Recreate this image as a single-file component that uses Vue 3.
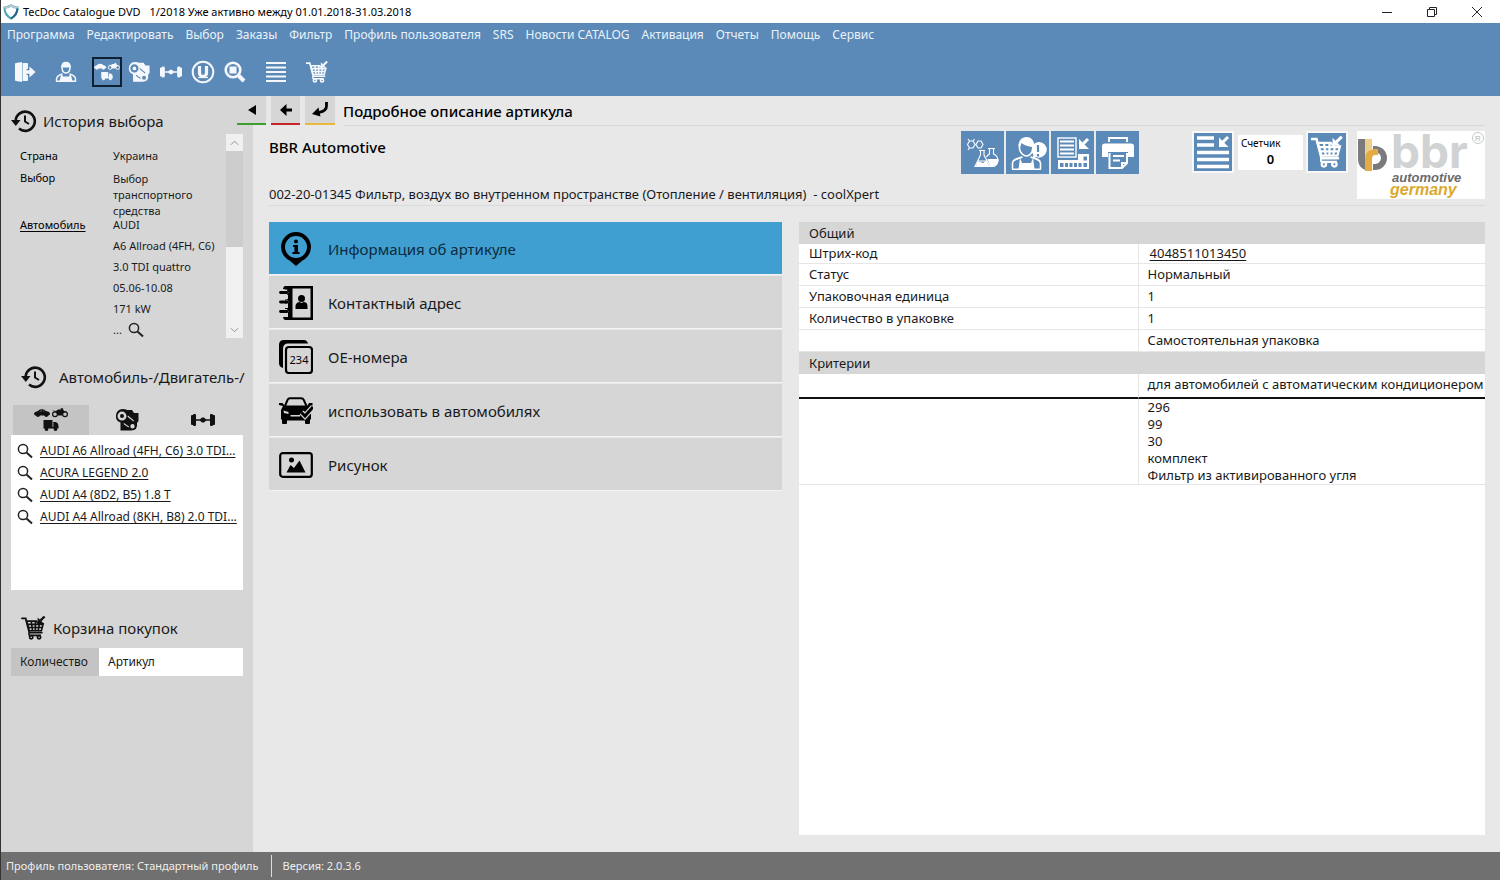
<script setup>
import { ref } from 'vue'

const menu = ['Программа', 'Редактировать', 'Выбор', 'Заказы', 'Фильтр', 'Профиль пользователя', 'SRS', 'Новости CATALOG', 'Активация', 'Отчеты', 'Помощь', 'Сервис']

const toolGroups = [
  [{ icon: 'exit', label: 'Выход' }],
  [{ icon: 'person', label: 'Клиент' }],
  [
    { icon: 'vehicles', label: 'Автомобили', on: true },
    { icon: 'engine', label: 'Двигатели' },
    { icon: 'axle', label: 'Оси' },
    { icon: 'universal', label: 'Универсальные' },
    { icon: 'find', label: 'Поиск' },
  ],
  [{ icon: 'lines', label: 'Список' }],
  [{ icon: 'cart', label: 'Корзина' }],
]

const vehicles = ['AUDI A6 Allroad (4FH, C6) 3.0 TDI...', 'ACURA LEGEND 2.0', 'AUDI A4 (8D2, B5) 1.8 T', 'AUDI A4 Allroad (8KH, B8) 2.0 TDI...']

const sections = [
  { icon: 'info', title: 'Информация об артикуле' },
  { icon: 'book', title: 'Контактный адрес' },
  { icon: 'numbers', title: 'ОЕ-номера' },
  { icon: 'carcheck', title: 'использовать в автомобилях' },
  { icon: 'image', title: 'Рисунок' },
]
const active = ref(0)

const general = [
  ['Статус', 'Нормальный'],
  ['Упаковочная единица', '1'],
  ['Количество в упаковке', '1'],
  ['', 'Самостоятельная упаковка'],
]
const criteria = ['296', '99', '30', 'комплект', 'Фильтр из активированного угля']
</script>

<template>
  <div class="app">
    <svg class="sprite" aria-hidden="true">
      <symbol id="exit" viewBox="0 0 22 22">
        <path d="M1 3Q1 2 2 2L8 1V21L2 20Q1 20 1 19Z" fill="currentColor" />
        <path d="M8.500 2H13Q14 2 14 3V8H12.500V14H14V19Q14 20 13 20H8.500Z" fill="currentColor" />
        <path d="M11.500 9.200H15.500V5.500L21.500 11L15.500 16.500V12.800H11.500Z" fill="currentColor" />
      </symbol>
      <symbol id="person" viewBox="0 0 22 22">
        <path d="M7 6C7 2 9 1.500 11 1.500S15 2 15 6C15 10 13 12 11 12S7 10 7 6Z" fill="none" stroke="currentColor" stroke-width="1.500" />
        <path d="M6.300 6.500C6 -.5 16 -.5 15.700 6.500Z" fill="currentColor" />
        <path d="M1.500 20.500V18C1.800 15 4 14 7.500 13M20.500 20.500V18C20.200 15 18 14 14.500 13M1 20.200H21" fill="none" stroke="currentColor" stroke-width="1.500" />
        <path d="M6.500 12.500L8 15.500H14L15.500 12.500L17.500 20H4.500Z" fill="currentColor" />
      </symbol>
      <symbol id="vehicles" viewBox="0 0 34 24">
        <path d="M0 6Q0 4 3 3.500L6 1.500Q10 .5 12 3L15 4Q16 4.500 16 6.500L14.500 7.500H1Z" fill="currentColor" />
        <path d="M5.200 3.500L6.500 2.500H8V3.500ZM9 2.500H10L11 3.500H9Z" fill="#ffffff" fill-opacity=".35" />
        <circle cx="4" cy="7.200" r="1.800" fill="currentColor" /><circle cx="12.300" cy="7.200" r="1.800" fill="currentColor" />
        <circle cx="21" cy="6.200" r="2.400" fill="none" stroke="currentColor" stroke-width="1.200" /><circle cx="31" cy="6.200" r="2.400" fill="none" stroke="currentColor" stroke-width="1.200" />
        <path d="M18 2.500L22 3L24 1.500L27 1.500L26.500 .5L28.500 0L30 3L33 3.500L29.500 4.500L28 7.500H23.500L22.500 4.500Z" fill="currentColor" />
        <path d="M9.500 12H18.500V20H9.500ZM19.300 14H22Q24.500 15 24.500 18V20.500H9.500V19H19.300Z" fill="currentColor" />
        <circle cx="12.500" cy="21" r="1.900" fill="currentColor" /><circle cx="21.500" cy="21" r="1.900" fill="currentColor" />
      </symbol>
      <symbol id="engine" viewBox="0 0 24 22">
        <path fill-rule="evenodd" d="M7 0Q11 0 12 1H17L19 4H23.500V12L22 14Q23 21.500 16 21.500H5.500V13.500A7 7 0 0 1 7 0ZM7 2.600A4.500 4.500 0 1 0 7 11.600A4.500 4.500 0 0 0 7 2.600ZM17.500 15A2.200 2.200 0 1 0 17.500 19.400A2.200 2.200 0 0 0 17.500 15ZM13 6.500L12.500 7.700L18.500 12.500L19 11.500ZM9 14L8.500 15L13.500 18.500L14 17.500Z" fill="currentColor" />
        <circle cx="7" cy="7.100" r="2" fill="currentColor" />
      </symbol>
      <symbol id="axle" viewBox="0 0 24 12">
        <rect x="0" y="1" width="5" height="10" rx="1" fill="currentColor" /><rect x="2" y="0" width="3" height="12" rx="1" fill="currentColor" />
        <rect x="19" y="0" width="3" height="12" rx="1" fill="currentColor" /><rect x="19" y="1" width="5" height="10" rx="1" fill="currentColor" />
        <path d="M5 5.200H9L11 3.500H13L15 5.200H19V6.800H15L13 8.500H11L9 6.800H5Z" fill="currentColor" />
      </symbol>
      <symbol id="universal" viewBox="0 0 24 24">
        <circle cx="12" cy="12" r="10.300" fill="none" stroke="currentColor" stroke-width="2" />
        <path d="M8.500 6V13A3.500 3.500 0 0 0 15.500 13V6" fill="none" stroke="currentColor" stroke-width="3.200" />
        <path d="M7 17.500H17" stroke="currentColor" stroke-width="1.200" />
      </symbol>
      <symbol id="find" viewBox="0 0 22 22">
        <circle cx="9" cy="9" r="7.300" fill="none" stroke="currentColor" stroke-width="2.600" />
        <rect x="5.500" y="5.500" width="7" height="7" fill="currentColor" />
        <path d="M14.500 14.500L20 20" stroke="currentColor" stroke-width="4" />
      </symbol>
      <symbol id="lines" viewBox="0 0 20 20">
        <path d="M0 1H20M0 5.500H20M0 10H20M0 14.500H20M0 19H20" stroke="currentColor" stroke-width="2" />
      </symbol>
      <symbol id="cart" viewBox="0 0 26 26">
        <path d="M.5 2.500H4.500L8.500 18H22" fill="none" stroke="currentColor" stroke-width="2" stroke-linecap="round" />
        <path d="M5.500 5.500H16L18.500 8.500H23.500L21.500 16H8.500Z" fill="none" stroke="currentColor" stroke-width="1.800" />
        <path d="M6.500 9H23M7.500 12.500H22.500M10.500 5.500L12 16M15 6V16M19.500 8.500L18 16" fill="none" stroke="currentColor" stroke-width="1.800" />
        <path d="M8.500 18C7.500 20.500 8 21 10 21H21" fill="none" stroke="currentColor" stroke-width="1.700" />
        <circle cx="10.500" cy="23" r="1.800" fill="none" stroke="currentColor" stroke-width="1.800" /><circle cx="19" cy="23" r="1.800" fill="none" stroke="currentColor" stroke-width="1.800" />
        <path d="M25 .5L20.500 5" stroke="currentColor" stroke-width="2.400" /><path d="M17.500 1.500V7.500H23.500Z" fill="currentColor" />
      </symbol>
      <symbol id="history" viewBox="0 0 26 24">
        <path d="M4.600 12A9.600 9.600 0 1 1 8 19.600" fill="none" stroke="currentColor" stroke-width="2.600" />
        <path d="M0 11H9.500L4.800 17Z" fill="currentColor" />
        <path d="M14 6.500V12.500L18 15" fill="none" stroke="currentColor" stroke-width="2" />
      </symbol>
      <symbol id="lens" viewBox="0 0 16 16">
        <circle cx="6" cy="6" r="4.600" fill="none" stroke="currentColor" stroke-width="1.500" />
        <path d="M9.500 9.500L15 14.500" stroke="currentColor" stroke-width="2" />
      </symbol>
      <symbol id="info" viewBox="0 0 34 34">
        <circle cx="17" cy="15" r="13" fill="none" stroke="currentColor" stroke-width="4" />
        <path d="M10 28H24L17 34Z" fill="currentColor" />
        <circle cx="17" cy="9.500" r="2" fill="currentColor" />
        <path d="M14 13H19V20H20.500V22H13.500V20H15.500V15H14Z" fill="currentColor" />
      </symbol>
      <symbol id="book" viewBox="0 0 34 34">
        <path fill-rule="evenodd" d="M6 0H34V34H6Q4.500 34 4 31H9V27H6V22H9V18H6V13H9V9H6V4H9L4 3Q4.500 0 6 0ZM13.500 2.500V31.500H31.500V2.500Z" fill="currentColor" />
        <path d="M2 4.500H8Q10 6.500 8 8.500H2M2 14H8Q10 16 8 18H2M2 23.500H8Q10 25.500 8 27.500H2" fill="none" stroke="#d6d6d6" stroke-width="1" />
        <path d="M1.500 6.500H8M1.500 16H8M1.500 25.500H8" stroke="currentColor" stroke-width="2.800" stroke-linecap="round" />
        <circle cx="22.500" cy="12.500" r="3.500" fill="currentColor" /><path d="M16.500 23V19.500C17 17 19 16 20.500 16L22.500 17L24.500 16C27 16 28.500 17.500 28.500 20V23Z" fill="currentColor" />
      </symbol>
      <symbol id="numbers" viewBox="0 0 34 34">
        <path d="M25 0Q28 0 29 3.500H9Q4 3.500 4 9V28Q0 27 0 23V5Q0 0 5 0Z" fill="currentColor" />
        <rect x="7" y="7" width="26" height="26" rx="3" fill="none" stroke="currentColor" stroke-width="2.200" />
        <text x="20" y="24" text-anchor="middle" font-size="11" fill="currentColor">234</text>
      </symbol>
      <symbol id="carcheck" viewBox="0 0 34 34">
        <path d="M6 12L8.500 6Q9.300 4.200 11 4.200H22Q24 4.200 24.800 6L27.500 12" fill="none" stroke="currentColor" stroke-width="2" />
        <path d="M0 9H3.500L5.500 11.500H28.500L30 9H33.500V11.500L31 12L32 15V25L31 26V29Q31 30 30 30H27Q26 30 26 29V26.500H8V29Q8 30 7 30H4Q3 30 3 29V26L2 25V16L4 12L0 11Z" fill="currentColor" />
        <path d="M4.500 16.500L9.500 18V20L5 19ZM11.500 21H21V22.500H11.500Z" fill="#d6d6d6" />
        <path d="M22.500 18.500L26 22L34 13" fill="none" stroke="#d6d6d6" stroke-width="5.500" />
        <path d="M22.500 18.500L26 22L34 13" fill="none" stroke="currentColor" stroke-width="3" />
      </symbol>
      <symbol id="image" viewBox="0 0 34 26">
        <rect x="1.200" y="1.200" width="31.600" height="23.600" rx="2.500" fill="none" stroke="currentColor" stroke-width="2.200" />
        <circle cx="12.500" cy="8" r="2.500" fill="currentColor" /><path d="M7.500 20.500L11.500 13L15 16L20.500 8.500L26.500 20.500Z" fill="currentColor" />
      </symbol>
      <symbol id="flasks" viewBox="0 0 42 42">
        <g fill="none" stroke="currentColor" stroke-width="1.100">
          <path d="M5.500 12.500L7.500 9H11L13 12.500L11 16H7.500ZM14 12.500L16 9H19L21 12.500L19 16H16ZM13 12.500H14M7.500 9L6 7M11 9L12.500 7M7.500 16L6 18" />
          <path d="M17 18.500H23M18.500 18.500V23L13 34.500H28L22 23V18.500M15.500 29H25" />
          <path d="M26 16.500H33M27.500 16.500V22A7 7 0 0 0 24.500 25M31.500 16.500V22A6.800 6.800 0 0 1 32 34.500H27" />
        </g>
        <path d="M15.500 29L21 31L24.500 28.500L27 34H14ZM25.500 27H36.500C37 31 34 34 31 34H28Z" fill="currentColor" />
      </symbol>
      <symbol id="advisor" viewBox="0 0 42 42">
        <path d="M12.500 12V17C13 21 17 24 19.500 24S25.500 21 26 17V12" fill="none" stroke="currentColor" stroke-width="1.600" />
        <path d="M12 16C9 2 29 1 27 15C22 15 17 13 14.500 11Q14 14 12 16Z" fill="currentColor" />
        <path d="M5.500 37V31C6 27.500 10 26.500 15.500 25M33.500 37V31C33 27.500 29 26.500 23.500 25M5 37.200H34" fill="none" stroke="currentColor" stroke-width="1.600" />
        <path d="M13 26L15 31H24L26 26L27.500 37H11.500Z" fill="currentColor" />
        <path d="M31.500 10A7.800 7.800 0 1 1 29 25L25.500 26L26.500 23A8 8 0 0 1 31.500 10Z" fill="currentColor" />
        <path d="M31 13V20M31 22V24.500" stroke="#5c8ab8" stroke-width="2.200" />
      </symbol>
      <symbol id="transfer" viewBox="0 0 42 42">
        <rect x="6" y="6" width="18" height="19" fill="none" stroke="currentColor" stroke-width="1.400" />
        <path d="M8 9.500H22M8 13.500H22M8 17.500H22M8 21.500H22" stroke="currentColor" stroke-width="1.800" />
        <path d="M6 28H26V22H37V37H6Z" fill="currentColor" />
        <path d="M8 31H11.500V35H8ZM13 31H16V35H13ZM17.500 31H20.500V35H17.500ZM22 31H25V35H22ZM26.500 31H29.500V35H26.500ZM31.500 31H35V35H31.500ZM31.500 24.500H35V28.500H31.500Z" fill="#5c8ab8" />
        <path d="M36 7L30 13" stroke="currentColor" stroke-width="3" /><path d="M27 7V17H37Z" fill="currentColor" />
      </symbol>
      <symbol id="printer" viewBox="0 0 42 42">
        <path d="M12 10V6H30V10" fill="none" stroke="currentColor" stroke-width="1.800" />
        <path d="M5 14Q5 11.500 8 11.500H34Q37 11.500 37 14V25H31V20H11V25H5Z" fill="currentColor" />
        <path d="M12.500 21V36H25L30 31V21M25 36V31H30M16 24H27M16 28.500H23" fill="none" stroke="currentColor" stroke-width="2" />
      </symbol>
      <symbol id="addlist" viewBox="0 0 38 38">
        <path d="M3 5H20M3 12H20M3 19.500H35M3 26.500H35M3 33.500H35" stroke="currentColor" stroke-width="3.400" />
        <path d="M34 4L28 10" stroke="currentColor" stroke-width="3" /><path d="M25 4.500V14H34.500Z" fill="currentColor" />
      </symbol>
    </svg>

    <header class="titlebar">
      <svg class="shield" viewBox="0 0 16 16"><path d="M1.500 3.500Q5 3.500 8 1.500Q11 3.500 14.500 3.500Q14.500 11 8 14.500Q1.500 11 1.500 3.500Z" fill="#fff" stroke="#4fa9b8" stroke-width="2.200" /><path d="M1 3.500Q5 3.500 8 1.500Q11 3.500 15 3.500" fill="none" stroke="#b7c9d0" stroke-width="2" /><path d="M14.500 4.500Q14 11 8 14.500" fill="none" stroke="#2b6480" stroke-width="2" /></svg>
      <h1>TecDoc Catalogue DVD <span>1/2018 Уже активно между 01.01.2018-31.03.2018</span></h1>
      <div class="wincontrols">
        <button aria-label="Свернуть"><svg viewBox="0 0 12 12"><path d="M1 6.500H11" /></svg></button>
        <button aria-label="Восстановить"><svg viewBox="0 0 12 12"><path d="M1.500 3.500H8.500V10.500H1.500ZM3.500 3.500V1.500H10.500V8.500H8.500" /></svg></button>
        <button aria-label="Закрыть"><svg viewBox="0 0 12 12"><path d="M1 1L11 11M11 1L1 11" /></svg></button>
      </div>
    </header>

    <nav class="menu"><button v-for="m in menu" :key="m">{{ m }}</button></nav>

    <div class="toolbar">
      <div v-for="(g, i) in toolGroups" :key="i" class="group">
        <button v-for="t in g" :key="t.icon" :class="{ on: t.on }" :aria-label="t.label">
          <svg :class="'t-' + t.icon"><use :href="'#' + t.icon" /></svg>
        </button>
      </div>
    </div>

    <div class="body">
      <aside class="side">
        <h2 class="h-history"><svg class="i-history"><use href="#history" /></svg>История выбора</h2>
        <div class="history">
          <dl>
            <dt>Страна</dt><dd>Украина</dd>
            <dt>Выбор</dt><dd class="wrap">Выбор транспортного средства</dd>
            <dt class="car"><a href="#">Автомобиль</a></dt>
            <dd class="specs">
              <div>AUDI</div><div>A6 Allroad (4FH, C6)</div><div>3.0 TDI quattro</div><div>05.06-10.08</div><div>171 kW</div>
              <div class="more">... <svg class="i-lens"><use href="#lens" /></svg></div>
            </dd>
          </dl>
          <div class="scroll">
            <button aria-label="Вверх"><svg viewBox="0 0 10 6"><path d="M1 5L5 1L9 5" /></svg></button>
            <div class="thumb"></div>
            <button aria-label="Вниз"><svg viewBox="0 0 10 6"><path d="M1 1L5 5L9 1" /></svg></button>
          </div>
        </div>

        <h2 class="h-vehicle"><svg class="i-history"><use href="#history" /></svg><span>Автомобиль-/Двигатель-/</span></h2>
        <div class="tabs">
          <button class="on" aria-label="Автомобили"><svg class="s-vehicles"><use href="#vehicles" /></svg></button>
          <button aria-label="Двигатели"><svg class="s-engine"><use href="#engine" /></svg></button>
          <button aria-label="Оси"><svg class="s-axle"><use href="#axle" /></svg></button>
        </div>
        <ul class="vehicles">
          <li v-for="v in vehicles" :key="v"><svg class="i-lens"><use href="#lens" /></svg><a href="#">{{ v }}</a></li>
        </ul>

        <h2 class="h-cart"><svg class="i-cart"><use href="#cart" /></svg>Корзина покупок</h2>
        <table class="basket"><thead><tr><th>Количество</th><th>Артикул</th></tr></thead></table>
      </aside>

      <main class="main">
        <div class="crumbs">
          <button class="green" aria-label="Свернуть панель"><svg viewBox="0 0 16 16"><path d="M12 3V13L4 8Z" fill="currentColor" /></svg></button>
          <button class="red" aria-label="Назад"><svg viewBox="0 0 16 16"><path d="M2 8L8.500 2V6.500H14V9.500H8.500V14Z" fill="currentColor" /></svg></button>
          <button class="yellow" aria-label="К результату"><svg viewBox="0 0 16 16"><path d="M14.500 0V4Q14.500 9 7 10.500" fill="none" stroke="currentColor" stroke-width="2.800" /><path d="M0 12L6.500 5.500L8.500 14.500Z" fill="currentColor" /></svg></button>
          <h2>Подробное описание артикула</h2>
        </div>

        <div class="article">
          <div class="names">
            <h3>BBR Automotive</h3>
            <p>002-20-01345 Фильтр, воздух во внутренном пространстве (Отопление / вентиляция) &nbsp;- coolXpert</p>
          </div>
          <div class="actions">
            <button class="big" aria-label="Состав"><svg><use href="#flasks" /></svg></button>
            <button class="big" aria-label="Консультант"><svg><use href="#advisor" /></svg></button>
            <button class="big" aria-label="Передать"><svg><use href="#transfer" /></svg></button>
            <button class="big" aria-label="Печать"><svg><use href="#printer" /></svg></button>
          </div>
          <button class="small" aria-label="В список"><svg class="fill"><use href="#addlist" /></svg></button>
          <div class="counter"><span>Счетчик</span><strong>0</strong></div>
          <button class="small" aria-label="В корзину"><svg class="cartbig"><use href="#cart" /></svg></button>
          <svg class="logo" viewBox="0 0 128 68" role="img" aria-label="bbr automotive germany">
            <path d="M1 8H8V39Q1 36 1 28Z" fill="#7b7b7e" />
            <path d="M8 8H15V18Q9 20 8 26Z" fill="#eccf8d" />
            <path d="M16 15H18A12 12 0 0 1 18 39H16V33H18A6 6 0 0 0 18 21H16Z" fill="#7b7b7e" />
            <path d="M8 40V28Q8 18 18 18H21V24H18Q15 24 15 28V40Z" fill="#e3ab42" />
            <text x="34" y="37" class="bbr">bbr</text>
            <text x="35" y="51" class="auto">automotive</text>
            <text x="33" y="64" class="germ">germany</text>
            <circle cx="121" cy="7" r="5.500" fill="none" stroke="#c8c8c8" /><text x="121" y="10" text-anchor="middle" class="reg">R</text>
          </svg>
        </div>

        <div class="panes">
          <div class="sections">
            <button v-for="(s, i) in sections" :key="s.icon" :class="{ on: i === active }" @click="active = i">
              <svg><use :href="'#' + s.icon" /></svg>{{ s.title }}
            </button>
          </div>
          <div class="details">
            <table>
              <colgroup><col class="k" /><col class="v" /></colgroup>
              <tbody>
                <tr class="head"><th colspan="2">Общий</th></tr>
                <tr class="code"><td>Штрих-код</td><td><a href="#">4048511013450</a></td></tr>
                <tr v-for="r in general" :key="r[1] + r[0]"><td>{{ r[0] }}</td><td>{{ r[1] }}</td></tr>
                <tr class="head"><th colspan="2">Критерии</th></tr>
                <tr class="marked"><td></td><td>для автомобилей с автоматическим кондиционером</td></tr>
                <tr class="list"><td></td><td><div v-for="c in criteria" :key="c">{{ c }}</div></td></tr>
              </tbody>
            </table>
          </div>
        </div>
      </main>
    </div>

    <footer class="status"><span>Профиль пользователя: Стандартный профиль</span><span>Версия: 2.0.3.6</span></footer>
  </div>
</template>

<style>
body { margin: 0; }
</style>

<style scoped>
.app { box-sizing: border-box; min-height: 100vh; display: flex; flex-direction: column; border-left: 1px solid #333; background: #e8e8e8; color: #1a1a1a; font: 12px/16px "Noto Sans", "Open Sans", sans-serif; }
.app *, .app *::before { box-sizing: border-box; }
.sprite { display: none; }
button { border: 0; padding: 0; margin: 0; background: none; color: inherit; font: inherit; display: flex; align-items: center; justify-content: center; }
a { color: inherit; text-underline-offset: 2px; }
h1, h2, h3, p, dl, dd, ul { margin: 0; padding: 0; font-weight: 400; }
svg { flex: none; }

.titlebar { display: flex; align-items: center; height: 23px; background: #fff; padding-left: 2px; }
.shield { width: 16px; height: 16px; }
.titlebar h1 { flex: 1; margin-left: 4px; font-size: 11px; color: #000; }
.titlebar h1 span { margin-left: 6px; }
.wincontrols { display: flex; padding-right: 1px; }
.wincontrols button { width: 45px; height: 20px; }
.wincontrols svg { width: 12px; height: 12px; fill: none; stroke: #222; }

.menu { display: flex; gap: 12px; padding: 0 6px; height: 24px; align-items: center; background: #5c8ab8; color: #eaf2fa; }
.toolbar { display: flex; align-items: center; gap: 11px; height: 49px; padding-left: 9px; background: #5c8ab8; color: #f4f8fc; }
.group { display: flex; gap: 2px; }
.group button { width: 30px; height: 30px; }
.group button.on { border: 2px solid #10202f; }
.group svg { width: 22px; height: 22px; }
.group .t-vehicles { width: 26px; height: 22px; }
.group .t-universal { width: 24px; height: 24px; }
.group .t-lines { width: 20px; height: 20px; }
.group .t-axle { height: 14px; }

.body { flex: 1; display: flex; }
.side { width: 252px; flex: none; background: #d6d6d6; padding: 12px 10px 0; }
.side h2 { display: flex; align-items: center; font-size: 15px; line-height: 26px; white-space: nowrap; }
.i-history { width: 26px; height: 24px; margin-right: 6px; color: #111; }
.history { display: flex; height: 204px; }
.history dl { flex: 1; display: grid; grid-template-columns: 93px 1fr; align-content: start; padding: 14px 0 0 9px; font-size: 11px; line-height: 16px; white-space: nowrap; }
.history dt { height: 22px; color: #000; }
.history .wrap { white-space: normal; width: 90px; }
.history .wrap, .history .specs, .history .car { padding-top: 1px; }
.history .car, .history .specs { margin-top: -3px; }
.specs div { height: 21px; }
.more { display: flex; gap: 6px; }
.i-lens { width: 16px; height: 16px; color: #222; }
.scroll { width: 17px; display: flex; flex-direction: column; background: #f0f0f0; }
.scroll button { height: 17px; width: 17px; }
.scroll button:last-child { margin-top: auto; }
.scroll svg { width: 9px; height: 6px; fill: none; stroke: #888; }
.thumb { height: 96px; background: #cdcdcd; }
.side .h-vehicle { margin-top: 26px; padding-left: 10px; }
.h-vehicle .i-history { margin-right: 12px; }
.tabs { display: flex; margin-top: 15px; padding: 0 2px; }
.tabs button { flex: 1; height: 30px; color: #111; }
.tabs .on { background: #c4c4c4; }
.s-vehicles { width: 34px; height: 24px; }
.s-engine { width: 24px; height: 22px; }
.s-axle { width: 24px; height: 12px; }
.vehicles { list-style: none; height: 155px; background: #fff; padding: 5px 0 0 6px; }
.vehicles li { display: flex; align-items: center; height: 22px; white-space: nowrap; }
.vehicles a { margin-left: 7px; }
.side .h-cart { margin-top: 25px; padding-left: 10px; }
.i-cart { width: 25px; height: 24px; margin-right: 7px; color: #111; }
.basket { width: 100%; margin-top: 7px; border-collapse: collapse; background: #fff; }
.basket th { height: 28px; padding: 0 9px; font-weight: 400; text-align: left; }
.basket th:first-child { width: 88px; background: #c4c4c4; }

.main { flex: 1; min-width: 0; display: flex; flex-direction: column; padding: 0 15px 17px 16px; }
.crumbs { display: flex; gap: 5px; margin-left: -32px; height: 30px; }
.crumbs button { width: 29px; height: 29px; background: #d6d6d6; border-bottom: 2px solid; color: #000; }
.crumbs .green { border-color: #3c9e2b; }
.crumbs .red { border-color: #c8242b; }
.crumbs .yellow { border-color: #e9b93c; width: 30px; }
.crumbs svg { width: 16px; height: 16px; }
.crumbs h2 { flex: 1; margin-left: 3px; border-bottom: 1px solid #d8d8d8; font-size: 15px; font-weight: 500; line-height: 30px; color: #000; }
.article { display: flex; height: 80px; padding-top: 5px; border-bottom: 1px solid #dadada; }
.names { flex: 1; min-width: 0; white-space: nowrap; }
.names h3 { font-size: 15px; font-weight: 500; line-height: 32px; color: #000; }
.names p { margin-top: 23px; font-size: 13px; line-height: 16px; }
.actions { display: flex; gap: 2px; margin-right: 53px; }
.big { width: 43px; height: 43px; background: #5c8ab8; color: #fff; }
.big svg { width: 42px; height: 42px; }
.small { width: 42px; height: 42px; border: 2px solid #f8f8f8; background: #5c8ab8; color: #fff; }
.fill { width: 38px; height: 38px; }
.cartbig { width: 32px; height: 32px; }
.counter { width: 65px; height: 35px; margin: 4px 3px 0 4px; background: #fff; padding: 0 3px; display: flex; flex-direction: column; font-size: 10px; color: #000; }
.counter strong { align-self: center; font-size: 13px; font-weight: 600; }
.logo { width: 128px; height: 68px; margin-left: 9px; background: #fff; overflow: visible; }
.bbr { font: 700 46px "Inter", sans-serif; fill: #d0d2d3; }
.auto { font: italic 700 13px "Liberation Sans", sans-serif; fill: #6b6b6e; }
.germ { font: italic 700 16px "Liberation Sans", sans-serif; fill: #dba92f; }
.reg { font: 8px "Liberation Sans", sans-serif; fill: #b8b8b8; }

.panes { flex: 1; display: flex; gap: 17px; margin-top: 16px; }
.sections { flex: 513 1 0; display: flex; flex-direction: column; gap: 1px; }
.sections button { height: 53px; justify-content: flex-start; padding: 2px 0 0 10px; background: #d6d6d6; border-bottom: 1px solid #f4f4f4; font-size: 15px; line-height: 20px; }
.sections button.on { background: #3f9fd1; color: #0d2b3c; }
.sections svg { width: 34px; height: 34px; margin-right: 15px; color: #000; }
.details { flex: 686 1 0; min-width: 0; background: #fff; font-size: 13px; line-height: 17px; }
.details table { width: 100%; border-collapse: separate; border-spacing: 0; table-layout: fixed; }
.k { width: 49.5%; }
.details td, .details th { height: 22px; padding: 0 0 0 10px; border-bottom: 1px solid #e6e6e6; font-weight: 400; text-align: left; white-space: nowrap; }
.details td:first-child { border-right: 1px solid #e6e6e6; }
.details td + td { padding-left: 9px; }
.details .head th { background: #d6d6d6; border: 0; }
.details .code td { height: 20px; }
.details .code td + td { padding-left: 11px; }
.details .marked td { height: 25px; padding-bottom: 3px; border-bottom: 2px solid #111; }

.status { display: flex; align-items: center; height: 28px; background: #707070; color: #eee; font-size: 11px; padding-left: 5px; }
.status span + span { margin-left: 12px; padding-left: 11px; border-left: 1px solid #ddd; line-height: 22px; }
</style>
